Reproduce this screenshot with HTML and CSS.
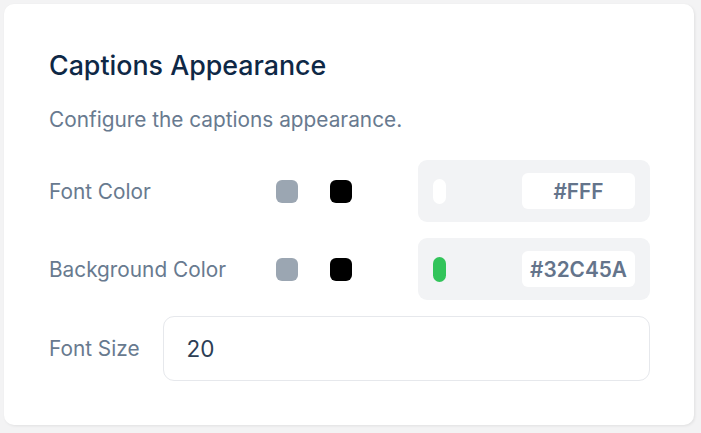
FILE: index.html
```html
<!DOCTYPE html>
<html lang="en">
<head>
    <meta charset="UTF-8">
    <meta name="viewport" content="width=device-width, initial-scale=1.0">
    <title>Captions Appearance</title>
    <link rel="stylesheet" href="styles.css">
</head>
<body>
    <div class="card">
        <h2 class="title">Captions Appearance</h2>
        <p class="subtitle">Configure the captions appearance.</p>
        <div class="color-row">
            <div class="label">Font Color</div>
            <span class="swatch gray"></span>
            <span class="swatch black"></span>
            <div class="picker">
                <span class="pill white"></span>
                <div class="hex">#FFF</div>
            </div>
        </div>
        <div class="color-row">
            <div class="label">Background Color</div>
            <span class="swatch gray"></span>
            <span class="swatch black"></span>
            <div class="picker">
                <span class="pill green"></span>
                <div class="hex">#32C45A</div>
            </div>
        </div>
        <div class="size-row">
            <div class="label">Font Size</div>
            <input class="size-input" type="text" value="20">
        </div>
    </div>
</body>
</html>
```

FILE: styles.css
```css
*, *:before, *:after {
    box-sizing: border-box;
}
body {
    margin: 0;
    padding: 4px 7px 7px 4px;
    background: #f3f3f4;
    font-family: Inter, "Noto Sans", sans-serif;
}
.card {
    background: white;
    border-radius: 10px;
    padding: 45px 44px 44px 45px;
    box-shadow: 1px 1px 3px rgba(0, 0, 0, 0.08);
}
.title {
    margin: 0;
    font-size: 26.8px;
    line-height: 32px;
    font-weight: 500;
    color: #0e2846;
}
.subtitle {
    margin: 25px 0 26px;
    font-size: 20.8px;
    line-height: 28px;
    color: #687a8f;
}
.label {
    font-size: 20.8px;
    color: #687a8f;
}
.color-row {
    display: flex;
    align-items: center;
    margin-bottom: 16px;
}
.color-row .label {
    width: 227px;
}
.swatch {
    width: 22px;
    height: 23px;
    border-radius: 6px;
}
.swatch.gray {
    background: #9ba6b2;
    margin-right: 32px;
}
.swatch.black {
    background: #000;
}
.picker {
    margin-left: auto;
    width: 232px;
    height: 62px;
    background: #f2f3f5;
    border-radius: 9px;
    display: flex;
    align-items: center;
    padding: 0 15px;
}
.pill {
    width: 13px;
    height: 25px;
    border-radius: 7px;
}
.pill.white {
    background: white;
}
.pill.green {
    background: #32c45a;
}
.hex {
    margin-left: auto;
    width: 113px;
    height: 36px;
    background: white;
    border-radius: 6px;
    font-size: 20.8px;
    font-weight: 600;
    color: #64748b;
    display: flex;
    align-items: center;
    justify-content: center;
}
.size-row {
    display: flex;
    align-items: center;
    gap: 23px;
}
.size-input {
    flex: 1;
    height: 65px;
    border: 1px solid #e6e8ec;
    border-radius: 11px;
    padding: 0 23px;
    font-family: inherit;
    font-size: 22.5px;
    color: #2c3e55;
    outline: none;
}
```
